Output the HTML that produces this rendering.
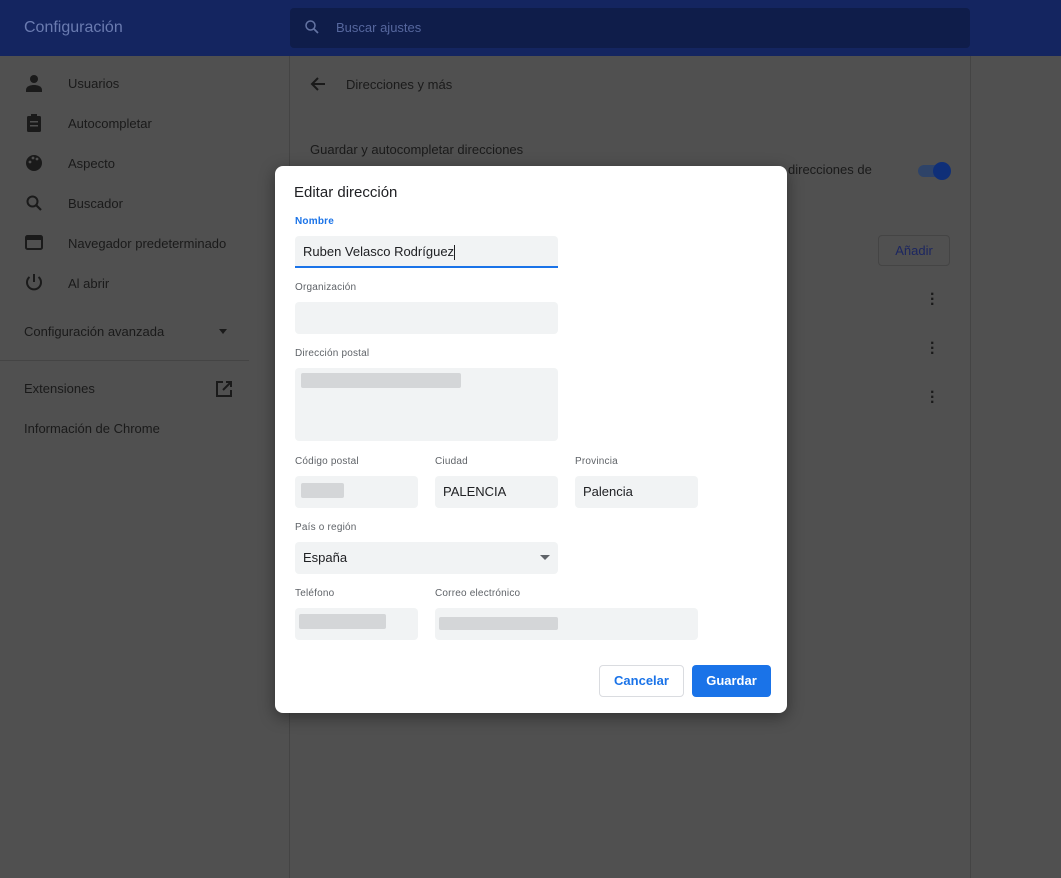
<!DOCTYPE html>
<html style="background:#505050"><head><meta charset="utf-8"><style>
*{margin:0;padding:0;box-sizing:border-box}
html,body{background:#505050}
body{width:1061px;height:878px;overflow:hidden;font-family:"Liberation Sans",Roboto,sans-serif;position:relative}
.a{position:absolute}
.hdr{left:0;top:0;width:1061px;height:56px;background:#142560}
.side{color:#1a1a1a;font-size:13px}
.lbl{position:absolute;font-size:10px;color:#5f6368;letter-spacing:.2px}
.in{position:absolute;background:#f1f3f4;border-radius:4px;height:32px;font-size:13px;color:#202124;padding:0 8px;line-height:32px}
.blur{position:absolute;background:#d4d6d8;height:15px;border-radius:2px}
</style></head><body>
<div class="a" style="left:0;top:0;width:1061px;height:878px;background:#505050"></div>
<div class="a hdr"></div>
<div class="a" style="left:24px;top:19px;font-size:16px;color:#6a7bb0">Configuración</div>
<div class="a" style="left:290px;top:8px;width:680px;height:40px;background:#0f1d4a;border-radius:4px"></div>
<svg class="a" style="left:303px;top:18px" width="18" height="18" viewBox="0 0 24 24"><circle cx="10" cy="10" r="6" fill="none" stroke="#6474a3" stroke-width="2"/><path d="M14.5 14.5L20 20" stroke="#6474a3" stroke-width="2.2"/></svg>
<div class="a" style="left:336px;top:20px;font-size:13px;color:#56679e">Buscar ajustes</div>

<div class="a" style="left:289px;top:56px;width:1px;height:822px;background:#444"></div>
<div class="a" style="left:970px;top:56px;width:1px;height:822px;background:#444"></div>

<svg class="a" style="left:24px;top:72px" width="20" height="230" viewBox="0 0 20 230" fill="#1a1a1a">
<circle cx="10" cy="7" r="4"/><path d="M2 18c0-4 5-5 8-5s8 1 8 5v2H2z"/>
<rect x="3" y="44" width="14" height="16" rx="1.5"/><rect x="7" y="42" width="6" height="3"/>
<rect x="6" y="49" width="8" height="1.5" fill="#505050"/><rect x="6" y="53" width="8" height="1.5" fill="#505050"/>
<circle cx="10" cy="91" r="8"/><circle cx="6" cy="90" r="1.4" fill="#505050"/><circle cx="9" cy="86" r="1.4" fill="#505050"/><circle cx="13" cy="87" r="1.4" fill="#505050"/>
<circle cx="8.5" cy="129.5" r="5" fill="none" stroke="#1a1a1a" stroke-width="2"/><path d="M12 133l5 5" stroke="#1a1a1a" stroke-width="2.2"/>
<rect x="2" y="164" width="16" height="13" rx="1.5" fill="none" stroke="#1a1a1a" stroke-width="2"/><rect x="2" y="164" width="16" height="4"/>
<path d="M10 202v8" stroke="#1a1a1a" stroke-width="2"/><path d="M5.5 205a7 7 0 1 0 9 0" fill="none" stroke="#1a1a1a" stroke-width="2"/>
</svg>
<div class="a side" style="left:68px;top:76px">Usuarios</div>
<div class="a side" style="left:68px;top:116px">Autocompletar</div>
<div class="a side" style="left:68px;top:156px">Aspecto</div>
<div class="a side" style="left:68px;top:196px">Buscador</div>
<div class="a side" style="left:68px;top:236px">Navegador predeterminado</div>
<div class="a side" style="left:68px;top:276px">Al abrir</div>
<div class="a side" style="left:24px;top:324px">Configuración avanzada</div>
<div class="a" style="left:219px;top:329px;border:4px solid transparent;border-top:5px solid #1a1a1a"></div>
<div class="a" style="left:0;top:360px;width:249px;height:1px;background:#444"></div>
<div class="a side" style="left:24px;top:381px">Extensiones</div>
<svg class="a" style="left:215px;top:380px" width="18" height="18" viewBox="0 0 18 18" fill="none" stroke="#1a1a1a" stroke-width="2"><path d="M8 2H2v14h14v-6"/><path d="M11 2h5v5M16 2L8 10"/></svg>
<div class="a side" style="left:24px;top:421px">Información de Chrome</div>

<svg class="a" style="left:309px;top:75px" width="18" height="18" viewBox="0 0 18 18" fill="none" stroke="#1a1a1a" stroke-width="2"><path d="M16 9H3M9 3L3 9l6 6"/></svg>
<div class="a side" style="left:346px;top:77px">Direcciones y más</div>
<div class="a side" style="left:310px;top:142px">Guardar y autocompletar direcciones</div>
<div class="a side" style="left:788px;top:162px">direcciones de</div>
<div class="a" style="left:918px;top:165px;width:30px;height:12px;border-radius:6px;background:#2e4368"></div>
<div class="a" style="left:933px;top:162px;width:18px;height:18px;border-radius:50%;background:#0f2f78"></div>
<div class="a" style="left:878px;top:235px;width:72px;height:31px;border:1px solid #444;border-radius:4px;color:#1c2660;font-size:13px;text-align:center;line-height:29px">Añadir</div>
<div class="a" style="left:930px;top:292px;color:#1a1a1a;font-size:16px;line-height:5px;font-weight:bold">·<br>·<br>·</div>
<div class="a" style="left:930px;top:341px;color:#1a1a1a;font-size:16px;line-height:5px;font-weight:bold">·<br>·<br>·</div>
<div class="a" style="left:930px;top:390px;color:#1a1a1a;font-size:16px;line-height:5px;font-weight:bold">·<br>·<br>·</div>

<div class="a" style="left:275px;top:166px;width:512px;height:547px;background:#fff;border-radius:8px;box-shadow:0 4px 16px rgba(0,0,0,.4)"></div>
<div class="a" style="left:294px;top:184px;font-size:15px;color:#202124">Editar dirección</div>

<div class="lbl" style="left:295px;top:216px;color:#1a73e8;font-weight:bold">Nombre</div>
<div class="in" style="left:295px;top:236px;width:263px;border-bottom:2px solid #1a73e8;border-radius:4px 4px 0 0">Ruben Velasco Rodríguez<span style="display:inline-block;width:1px;height:15px;background:#202124;vertical-align:middle"></span></div>
<div class="lbl" style="left:295px;top:282px">Organización</div>
<div class="in" style="left:295px;top:302px;width:263px"></div>
<div class="lbl" style="left:295px;top:348px">Dirección postal</div>
<div class="in" style="left:295px;top:368px;width:263px;height:73px"></div>
<div class="blur" style="left:301px;top:373px;width:160px"></div>
<div class="lbl" style="left:295px;top:456px">Código postal</div>
<div class="lbl" style="left:435px;top:456px">Ciudad</div>
<div class="lbl" style="left:575px;top:456px">Provincia</div>
<div class="in" style="left:295px;top:476px;width:123px"></div>
<div class="blur" style="left:301px;top:483px;width:43px"></div>
<div class="in" style="left:435px;top:476px;width:123px">PALENCIA</div>
<div class="in" style="left:575px;top:476px;width:123px">Palencia</div>
<div class="lbl" style="left:295px;top:522px">País o región</div>
<div class="in" style="left:295px;top:542px;width:263px">España</div>
<div class="a" style="left:540px;top:555px;border:5px solid transparent;border-top:5px solid #5f6368"></div>
<div class="lbl" style="left:295px;top:588px">Teléfono</div>
<div class="lbl" style="left:435px;top:588px">Correo electrónico</div>
<div class="in" style="left:295px;top:608px;width:123px"></div>
<div class="blur" style="left:299px;top:614px;width:87px"></div>
<div class="in" style="left:435px;top:608px;width:263px"></div>
<div class="blur" style="left:439px;top:617px;width:119px;height:13px"></div>

<div class="a" style="left:599px;top:665px;width:85px;height:32px;border:1px solid #dadce0;border-radius:4px;color:#1a73e8;font-size:13px;font-weight:bold;text-align:center;line-height:30px">Cancelar</div>
<div class="a" style="left:692px;top:665px;width:79px;height:32px;background:#1a73e8;border-radius:4px;color:#fff;font-size:13px;font-weight:bold;text-align:center;line-height:32px">Guardar</div>
</body></html>
